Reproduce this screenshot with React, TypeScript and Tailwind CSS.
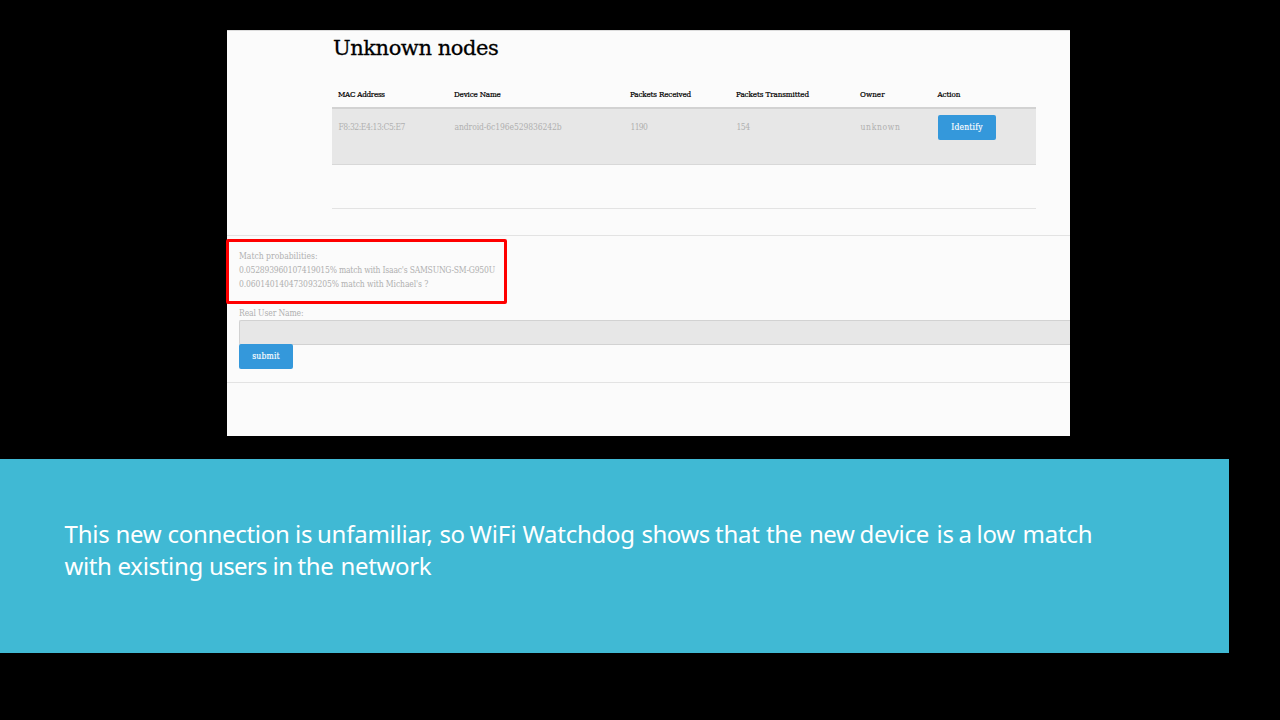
type Word = { text: string; cls: string };

const captionFirst: Word[] = [
  { text: "This", cls: "w-[51px] tracking-[-0.2px]" },
  { text: "new", cls: "w-[52px] tracking-[-0.3px]" },
  { text: "connection", cls: "w-[127.5px] tracking-[-0.3px]" },
  { text: "is", cls: "w-[22px] tracking-[-0.3px]" },
  { text: "unfamiliar,", cls: "w-[122.5px] tracking-[-0.25px]" },
  { text: "so", cls: "w-[30px] tracking-[-0.4px]" },
  { text: "WiFi", cls: "w-[53px] tracking-[-0.1px]" },
  { text: "Watchdog", cls: "w-[119px] tracking-[-0.25px]" },
  { text: "shows", cls: "w-[73.5px] tracking-[-0.5px]" },
  { text: "that", cls: "w-[51px] tracking-[-0.2px]" },
  { text: "the", cls: "w-[43px] tracking-[-0.4px]" },
  { text: "new", cls: "w-[50.5px] tracking-[-0.5px]" },
  { text: "device", cls: "w-[77px] tracking-[-0.3px]" },
  { text: "is", cls: "w-[22px] tracking-[-0.3px]" },
  { text: "a", cls: "w-[18px]" },
  { text: "low", cls: "w-[46px] tracking-[-0.3px]" },
  { text: "match", cls: "w-[74px] tracking-[-0.2px]" },
];

const captionSecond: Word[] = [
  { text: "with", cls: "w-[53px] tracking-[-0.4px]" },
  { text: "existing", cls: "w-[91.5px] tracking-[-0.3px]" },
  { text: "users", cls: "w-[63.5px] tracking-[-0.7px]" },
  { text: "in", cls: "w-[25px] tracking-[-0.5px]" },
  { text: "the", cls: "w-[43px] tracking-[-0.4px]" },
  { text: "network", cls: "w-[100px] tracking-[-0.35px]" },
];

function CaptionLine({ words }: { words: Word[] }) {
  return (
    <span className="flex h-8 whitespace-nowrap">
      {words.map((w, i) => (
        <span key={i} className={w.cls}>
          {w.text}
        </span>
      ))}
    </span>
  );
}

const columns: { title: string; value: string; head: string; cell: string }[] = [
  { title: "MAC Address", value: "F8:32:E4:13:C5:E7", head: "tracking-[-0.28px]", cell: "tracking-[-0.45px]" },
  { title: "Device Name", value: "android-6c196e529836242b", head: "tracking-[-0.18px]", cell: "tracking-[-0.1px]" },
  { title: "Packets Received", value: "1190", head: "tracking-[-0.16px]", cell: "tracking-[-0.7px]" },
  { title: "Packets Transmitted", value: "154", head: "tracking-[-0.1px]", cell: "tracking-[-0.5px]" },
  { title: "Owner", value: "unknown", head: "tracking-[0.05px]", cell: "tracking-[0.65px]" },
];

const grid = "grid grid-cols-[116px_176px_106px_124px_78px_1fr] pl-[6px]";

export default function App() {
  return (
    <main className="flex h-[720px] w-[1280px] flex-col overflow-hidden bg-black">
      <section className="mt-[30px] ml-[227px] h-[406px] w-[843px] border-t border-[#dcdcdc] bg-[#fbfbfb] font-['DejaVu_Serif_Condensed','DejaVu_Serif',serif] text-[8.5px] whitespace-nowrap text-[#b0b0b0]">
        <div className="ml-[105px] h-[178px] w-[704px] border-b border-[#e3e3e3]">
          <h1 className="h-[50px] pt-[3px] pl-px font-['DejaVu_Serif',serif] text-[21px] leading-[29px] tracking-[-0.45px] text-black [-webkit-text-stroke:0.3px_black]">
            Unknown nodes
          </h1>
          <div className={`${grid} h-[28px] border-b-2 border-[#d2d2d2] pt-[8px] text-[8px] leading-[12px] text-black [-webkit-text-stroke:0.2px_black]`}>
            {columns.map((c) => (
              <span key={c.title} className={c.head}>{c.title}</span>
            ))}
            <span className="-ml-[0.5px] tracking-[-0.1px]">Action</span>
          </div>
          <div className={`${grid} h-[56px] border-b border-[#d8d8d8] bg-[#e7e7e7]`}>
            {columns.map((c) => (
              <span key={c.title} className={`pt-[12px] pl-[0.5px] leading-[13px] ${c.cell}`}>{c.value}</span>
            ))}
            <button className="mt-[6px] h-[25px] w-[58px] rounded-[2px] bg-[#3498db] pb-px text-[8.5px] tracking-[0.2px] text-white [-webkit-text-stroke:0.15px_white]">
              Identify
            </button>
          </div>
        </div>
        <form className="mt-[26px] h-[148px] border-y border-[#e3e3e3]">
          <div className="-ml-px mt-[3px] h-[65px] w-[281px] rounded-[2px] border-3 border-[#ff0000] pt-[7px] pl-[10px] leading-[14.2px]">
            <p>Match probabilities:</p>
            <p className="tracking-[-0.21px]">0.052893960107419015% match with Isaac's SAMSUNG-SM-G950U</p>
            <p className="tracking-[-0.11px]">0.060140140473093205% match with Michael's ?</p>
          </div>
          <label className="mt-[2px] ml-[12px] block h-[14px] leading-[14px] tracking-[-0.12px]">Real User Name:</label>
          <div className="ml-[12px] h-[25px] rounded-l-[2px] border border-r-0 border-[#d2d2d2] bg-[#e7e7e7]" />
          <button type="button" className="relative -mt-px ml-[12px] block h-[25px] w-[54px] rounded-[2px] bg-[#3498db] pb-px text-[8.5px] tracking-[0.2px] text-white [-webkit-text-stroke:0.15px_white]">
            submit
          </button>
        </form>
      </section>
      <section className="mt-[23px] h-[194px] w-[1229px] bg-[#40b9d4] pt-[59px] pl-[64.5px] font-['Noto_Sans',sans-serif] text-[24px] leading-[32px] text-white">
        <CaptionLine words={captionFirst} />
        <CaptionLine words={captionSecond} />
      </section>
    </main>
  );
}
